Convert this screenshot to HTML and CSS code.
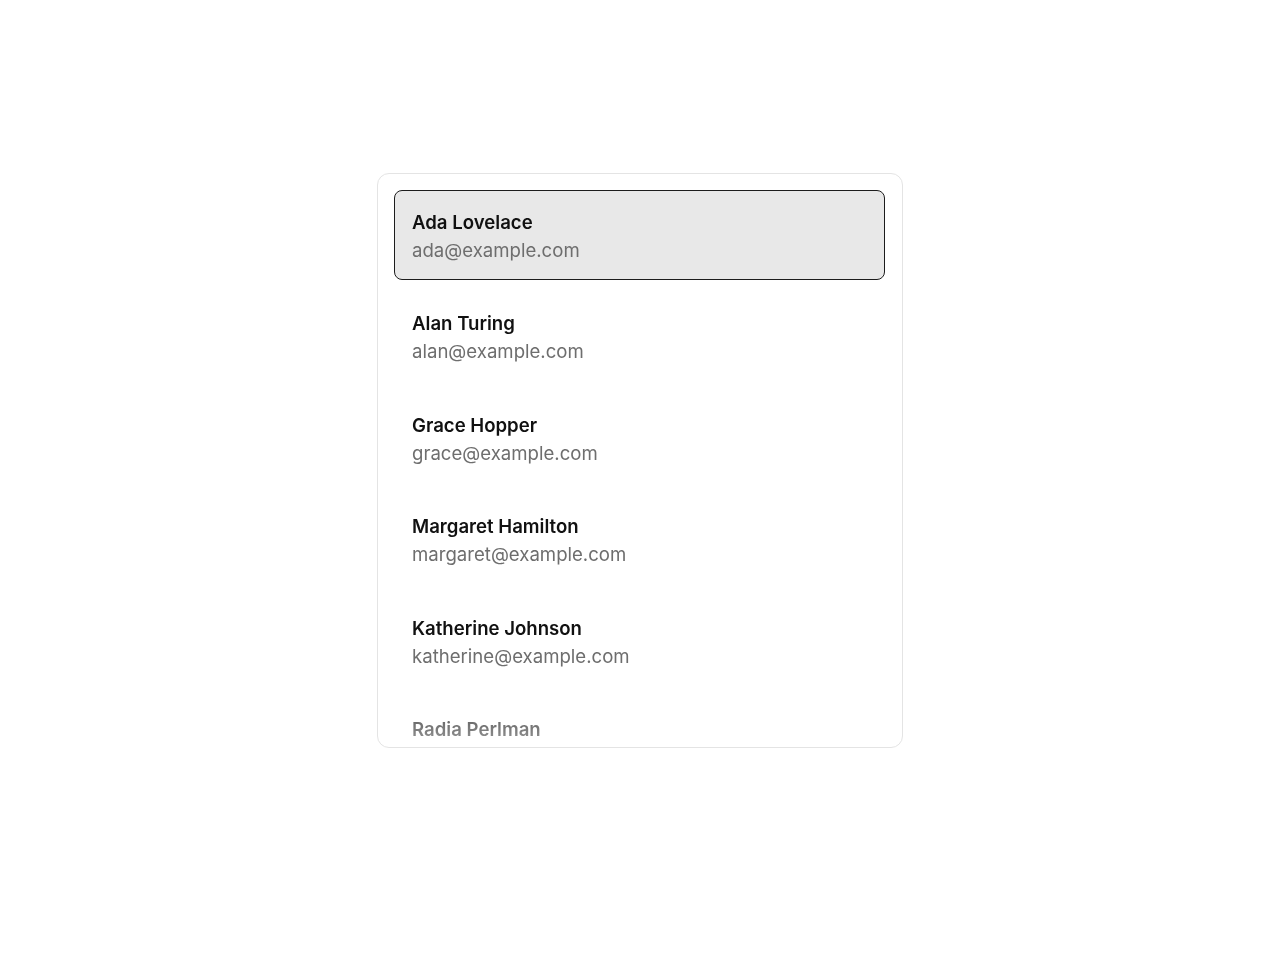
FILE: index.html
```html
<!DOCTYPE html>
<html lang="en">
<head>
<meta charset="utf-8">
<title>Contacts</title>
<link rel="stylesheet" href="styles.css">
</head>
<body>
<main class="page">
  <div class="card">
    <ul class="list" role="listbox">
      <li class="item selected" role="option" aria-selected="true"><span class="name">Ada Lovelace</span><span class="email">ada@example.com</span></li>
      <li class="item" role="option"><span class="name">Alan Turing</span><span class="email">alan@example.com</span></li>
      <li class="item" role="option"><span class="name">Grace Hopper</span><span class="email">grace@example.com</span></li>
      <li class="item" role="option"><span class="name">Margaret Hamilton</span><span class="email">margaret@example.com</span></li>
      <li class="item" role="option"><span class="name">Katherine Johnson</span><span class="email">katherine@example.com</span></li>
      <li class="item" role="option"><span class="name">Radia Perlman</span><span class="email">radia@example.com</span></li>
    </ul>
  </div>
</main>
</body>
</html>
```
FILE: styles.css
```css
* { box-sizing: border-box; }
html, body { margin: 0; padding: 0; background: #fff; }
body {
  font-family: Inter, "Noto Sans", "Liberation Sans", sans-serif;
  color: #111;
}
.page {
  display: flex;
  justify-content: center;
  padding-top: 173px;
}
.card {
  width: 526px;
  height: 575px;
  border: 1px solid #e4e4e4;
  border-radius: 12px;
  overflow: hidden;
  background: #fff;
}
.list {
  list-style: none;
  margin: 0;
  padding: 16px 17px 16px 16px;
  height: 100%;
  overflow: hidden;
  display: flex;
  flex-direction: column;
  gap: 11.4px;
  -webkit-mask-image: linear-gradient(to bottom, #000 calc(100% - 70px), rgba(0,0,0,0.4) 100%);
  mask-image: linear-gradient(to bottom, #000 calc(100% - 70px), rgba(0,0,0,0.4) 100%);
}
.item {
  flex: none;
  display: flex;
  flex-direction: column;
  padding: 17px 17px 15px;
  border: 1px solid transparent;
  border-radius: 8px;
  font-size: 18.6px;
  line-height: 28px;
}
.item.selected {
  background: #e8e8e8;
  border-color: #1c1c1c;
}
.name {
  font-weight: 600;
  color: #111;
}
.email {
  color: #6e6e6e;
}
```
